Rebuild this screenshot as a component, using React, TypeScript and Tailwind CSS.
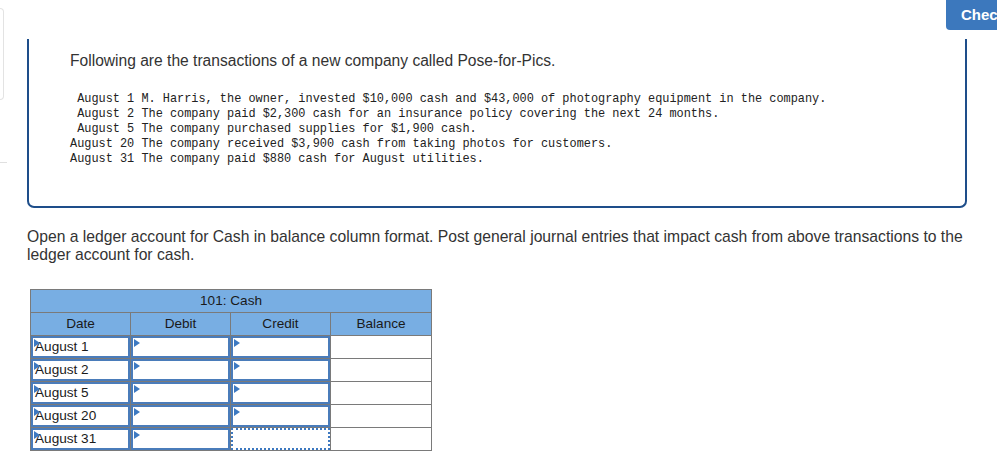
import React from 'react';

const transactions = [
  [' August 1', 'M. Harris, the owner, invested $10,000 cash and $43,000 of photography equipment in the company.'],
  [' August 2', 'The company paid $2,300 cash for an insurance policy covering the next 24 months.'],
  [' August 5', 'The company purchased supplies for $1,900 cash.'],
  ['August 20', 'The company received $3,900 cash from taking photos for customers.'],
  ['August 31', 'The company paid $880 cash for August utilities.'],
];

const dates = ['August 1', 'August 2', 'August 5', 'August 20', 'August 31'];

function Marker() {
  return (
    <span className="absolute left-[1px] top-[1px] w-0 h-0 border-y-[4px] border-y-transparent border-l-[6px] border-l-[#3d79c1]" />
  );
}

function InputCell({ children, dotted }: { children?: React.ReactNode; dotted?: boolean }) {
  return (
    <td className="border border-[#7a7a7a] p-0 h-[23px]">
      <div
        className={
          dotted
            ? 'relative h-[22px] border-2 border-dotted border-[#3d79c1] flex items-center pl-[2px]'
            : 'relative h-[22px] border-2 border-[#4a7cba] flex items-center pl-[2px]'
        }
      >
        {!dotted && <Marker />}
        {children}
      </div>
    </td>
  );
}

export default function App() {
  return (
    <div className="relative w-[997px] h-[467px] overflow-hidden bg-white" style={{ fontFamily: '"Liberation Sans", Arial, sans-serif' }}>
      {/* Check button */}
      <div className="absolute top-0 left-[946px] w-[80px] h-[30px] bg-[#3c78bd] rounded-bl-[4px] flex items-center pl-[15px] text-white font-bold text-[15px]">
        Check
      </div>

      <div className="flex">
        {/* left stub */}
        <div className="w-[27px] shrink-0 flex flex-col">
          <div className="mt-[8px] w-[4px] h-[92px] border border-l-0 border-[#e3e3e3] rounded-r-[4px]" />
          <div className="mt-[62px] w-[7px] h-px bg-[#e0e0e0]" />
        </div>

        <div className="w-[940px] shrink-0">
          {/* transaction box */}
          <div className="mt-[39px] h-[169px] border-x-2 border-b-2 border-[#1e4e8a] rounded-b-[7px] pl-[41px] pt-[13px]">
            <p className="text-[15.6px] leading-[18px] text-[#333]">
              Following are the transactions of a new company called Pose-for-Pics.
            </p>
            <div className="mt-[22px] text-[11.9px] leading-[15px] text-[#222]" style={{ fontFamily: '"Liberation Mono", "DejaVu Sans Mono", monospace' }}>
              {transactions.map(([d, t]) => (
                <div key={d} className="whitespace-pre">
                  {d} {t}
                </div>
              ))}
            </div>
          </div>

          <p className="mt-[20px] text-[15.7px] leading-[18px] text-[#333]">
            Open a ledger account for Cash in balance column format. Post general journal entries that impact cash from above transactions to the ledger account for cash.
          </p>

          {/* ledger */}
          <table className="mt-[25px] ml-[3px] border-collapse border border-[#7a7a7a] text-[13.6px] text-[#1a1a1a] table-fixed w-[401px]">
            <colgroup>
              <col className="w-[100px]" />
              <col className="w-[100px]" />
              <col className="w-[100px]" />
              <col className="w-[101px]" />
            </colgroup>
            <thead>
              <tr className="bg-[#78aee3] h-[23px]">
                <th colSpan={4} className="border border-[#7a7a7a] font-normal text-center text-[#1a1a1a] p-0">
                  101: Cash
                </th>
              </tr>
              <tr className="bg-[#78aee3] h-[23px]">
                <th className="border border-[#7a7a7a] font-normal text-[#1a1a1a] p-0">Date</th>
                <th className="border border-[#7a7a7a] font-normal text-[#1a1a1a] p-0">Debit</th>
                <th className="border border-[#7a7a7a] font-normal text-[#1a1a1a] p-0">Credit</th>
                <th className="border border-[#7a7a7a] font-normal text-[#1a1a1a] p-0">Balance</th>
              </tr>
            </thead>
            <tbody>
              {dates.map((d, i) => (
                <tr key={d}>
                  <InputCell>{d}</InputCell>
                  <InputCell />
                  <InputCell dotted={i === 4} />
                  <td className="border border-[#7a7a7a] h-[23px] bg-white p-0" />
                </tr>
              ))}
            </tbody>
          </table>
        </div>
      </div>
    </div>
  );
}
